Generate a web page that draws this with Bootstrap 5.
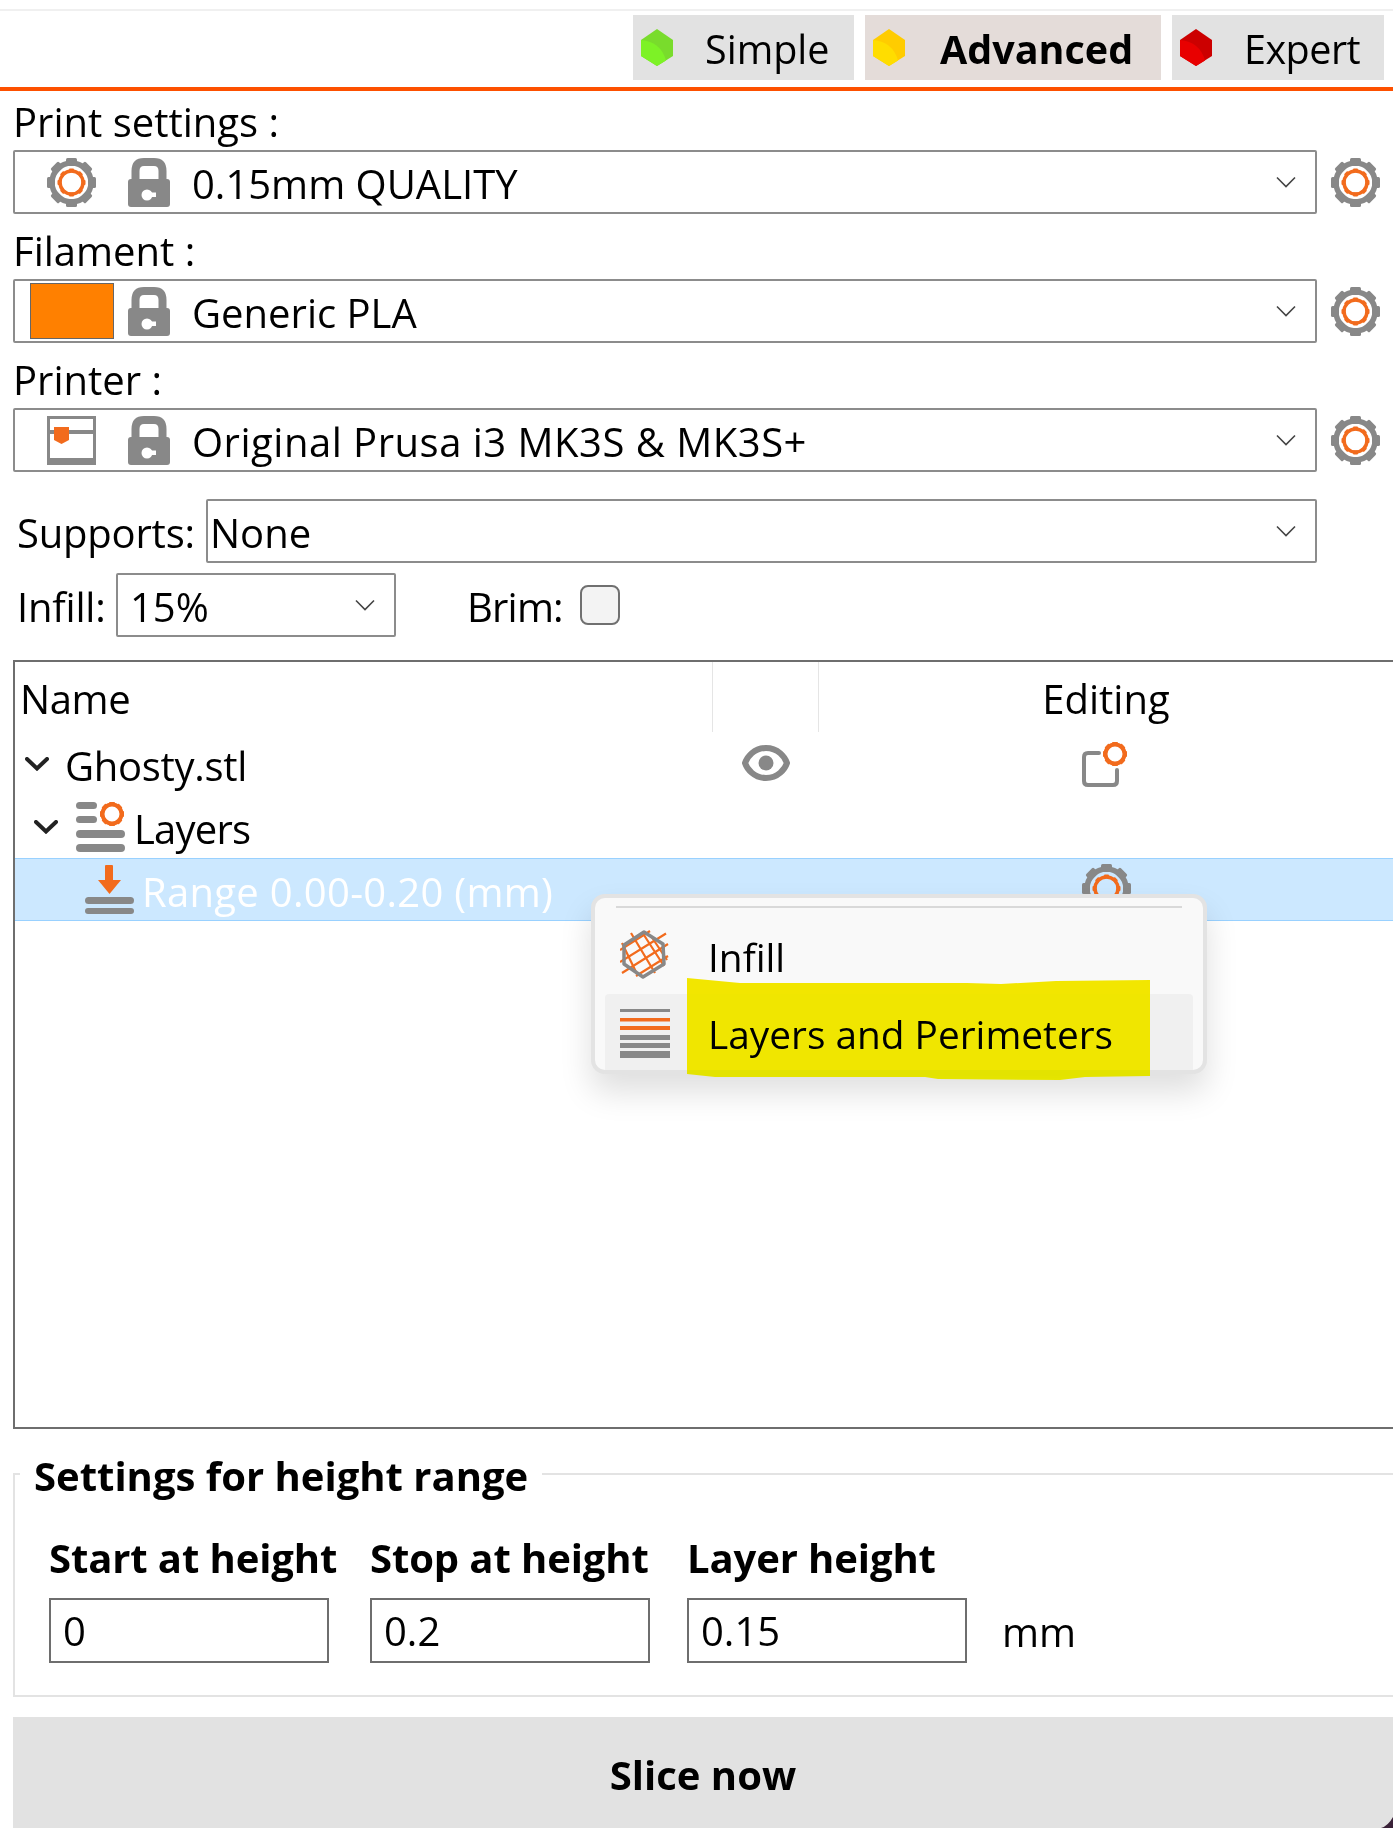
<!DOCTYPE html>
<html lang="en">
  <head>
    <meta charset="UTF-8" />
    <meta name="viewport" content="width=device-width, initial-scale=1" />
    <title>Height range settings</title>
    <link href="https://cdn.jsdelivr.net/npm/bootstrap@5.3.0/dist/css/bootstrap.min.css" rel="stylesheet" />
    <style>
      html, body { height: 1828px; overflow: hidden; }
      body { position: relative; background: #fff; color: #000; font-family: "Open Sans", "Noto Sans", sans-serif; font-size: 40px; line-height: 1.2; }

      /* Open Sans sits a little higher than the original font */
      .tree-row span, .form-select span, .field-row label { padding-top: 3px; }
      .mode-btn span, .row-range span { padding-top: 5px; }

      /* mode bar */
      .top-rule { height: 2px; margin-top: 9px; background: #f0f0f0; }
      .mode-bar { gap: 11px; margin-top: 4px; padding: 0 9px 7px 0; border-bottom: 4px solid #fd5000; }
      .mode-btn { height: 65px; padding: 0 0 0 8px; border: 0; border-radius: 0; background: #e2e2e2; color: #000; font-size: 39.5px; line-height: 1.2; }
      .mode-btn.active-mode { background: #e4dcd9; font-weight: 700; }
      .mode-btn svg { width: 32px; height: 37px; flex: none; }
      .mode-simple { width: 221px; }
      .mode-simple span { margin-left: 32px; }
      .mode-adv { width: 296px; }
      .mode-adv span { margin-left: 35px; }
      .mode-exp { width: 212px; }
      .mode-exp span { margin-left: 32px; letter-spacing: -.5px; }

      /* preset rows */
      .presets { padding-left: 13px; }
      .preset-label { height: 65px; padding-top: 13px; }
      .preset-label.first-label { height: 59px; padding-top: 7px; }
      .preset-combo { width: 1304px; height: 64px; padding: 0 19px 0 32px; background-image: none; border: 2px solid #8c8c8c; border-radius: 2px; color: #000; font-size: 40px; line-height: 1.2; }
      .combo-swatch { padding-left: 15px; }
      .combo-text { margin-left: 22px; }
      .combo-wide { letter-spacing: .5px; }
      .lock-ico { width: 42px; height: 49px; flex: none; margin-left: 32px; }
      .swatch-box { width: 84px; height: 56px; flex: none; background: #ff8000; border: 1px solid #666; }
      .swatch-box + .lock-ico { margin-left: 14px; }
      .gear-ico { width: 49px; height: 49px; flex: none; }
      .chev-ico { width: 20px; height: 12px; flex: none; margin-left: auto; }
      .side-gear { margin-left: 14px; }

      .field-row { height: 64px; padding-left: 4px; }
      .plain-combo { height: 64px; background-image: none; border: 2px solid #8c8c8c; border-radius: 2px; color: #000; font-size: 40px; line-height: 1.2; }
      .supports-label { width: 189px; flex: none; letter-spacing: -.2px; }
      .supports-combo { width: 1111px; padding: 0 19px 0 2px; }
      .infill-label { width: 99px; flex: none; letter-spacing: -.2px; }
      .infill-combo { width: 280px; padding: 0 19px 0 12px; }
      .brim-label { width: 113px; flex: none; margin-left: 71px; letter-spacing: -.8px; }
      .brim-check { width: 40px; height: 40px; margin: 0; background-color: #f3f3f3; border: 2px solid #707070; border-radius: 8px !important; }
      .mt-supports { margin-top: 27px; }
      .mt-infill { margin-top: 10px; }

      /* object list */
      .tree-panel { position: relative; height: 769px; margin: 23px 0 0 13px; border: 2px solid #6e6e6e; border-right: 0; }
      .tree-head { height: 70px; }
      .head-name { width: 698px; padding: 13px 0 0 5px; border-right: 1px solid #e5e5e5; letter-spacing: -.4px; }
      .head-eye { width: 106px; border-right: 1px solid #e5e5e5; }
      .head-edit { flex: 1; padding-top: 13px; text-align: center; }
      .tree-row { height: 62px; }
      .chev-bold { width: 24px; height: 14px; flex: none; }
      .row-file { height: 64px; padding-left: 10px; }
      .row-file .chev-bold { margin-right: 16px; }
      .row-file span { letter-spacing: -.3px; }
      .row-layers { padding-left: 19px; }
      .row-layers .chev-bold { margin-right: 18px; }
      .row-layers .layers-ico { width: 49px; height: 50px; margin-right: 9px; }
      .row-layers span { letter-spacing: -.8px; }
      .row-range { height: 63px; padding-left: 70px; background: #cce8ff; border-top: 1px solid #99d1ff; border-bottom: 1px solid #99d1ff; color: #fff; }
      .row-range .range-ico { width: 49px; height: 49px; margin-right: 8px; }
      .row-range span { letter-spacing: .3px; }
      .eye-ico { position: absolute; left: 727px; top: 83px; width: 48px; height: 36px; }
      .edit-ico { position: absolute; left: 1067px; top: 80px; width: 45px; height: 45px; }
      .row-gear { position: absolute; left: 1067px; top: 202px; }

      /* popup menu */
      .pop-menu { position: absolute; left: 576px; top: 232px; display: block; width: 616px; height: 180px; padding: 0 10px; background: #f9f9f9; border: 4px solid #e3e3e3; border-radius: 14px; box-shadow: 0 18px 32px rgba(0, 0, 0, .13); font-size: 39px; overflow: hidden; }
      .pop-menu .dropdown-divider { margin: 8px 11px 0; border-top: 2px solid #d9d9d9; opacity: 1; }
      .pop-item { height: 86px; padding: 0 0 0 15px; color: #000; font-size: 38.800px; line-height: 1.2; }
      .pop-item span { padding-top: 12px; }
      .pop-item:hover { color: #000; background: transparent; }
      .pop-item.hot { height: 78px; background: #f0f0f0; border-radius: 4px 4px 0 0; }
      .pop-item.hot span { padding-top: 2px; }
      .pop-item:hover.hot { background: #f0f0f0; }
      .pop-item svg { width: 50px; height: 49px; flex: none; margin-right: 38px; }
      .pop-item .infill-ico { margin-top: 6px; }
      .marker { position: absolute; left: 672px; top: 316px; width: 463px; height: 102px; z-index: 1001; mix-blend-mode: darken; }

      /* height range */
      .range-box { height: 249px; margin: 19px 0 0 13px; padding: 0 0 0 34px; border: 2px solid #e3e3e3; border-right: 0; }
      .range-box legend { margin: 0 0 0 -29px; padding: 4px 14px 0; font-size: 40px; font-weight: 700; line-height: 1.2; }
      .range-cols { margin-top: 34px; }
      .range-col { width: 280px; }
      .range-col + .range-col { margin-left: 41px; }
      .range-col.third-col { margin-left: 37px; }
      .range-col .form-label { display: block; margin: 0 0 16px; font-weight: 700; font-size: 40px; line-height: 1.2; white-space: nowrap; letter-spacing: -.1px; }
      .range-input { height: 65px; padding: 0 12px; border: 2px solid #6e6e6e; border-radius: 0; color: #000; font-size: 40px; }
      .unit-text { margin: 0 0 7px 35px; }

      .slice-btn { display: block; width: 1380px; height: 111px; margin: 20px 0 0 13px; padding: 5px 0 0; border: 0; border-radius: 0; background: #e2e2e2; color: #000; font-size: 40px; font-weight: 700; }
      .corner-mark { position: absolute; right: 0; bottom: 0; width: 12px; height: 11px; }
    </style>
  </head>
  <body>
    <svg width="0" height="0" class="position-absolute">
      <defs>
        <g id="teeth-gray" fill="#888">
          <rect x="19" y="0" width="11" height="8" rx="1.500" />
          <rect x="19" y="0" width="11" height="8" rx="1.500" transform="rotate(45 24.5 24.5)" />
          <rect x="19" y="0" width="11" height="8" rx="1.500" transform="rotate(90 24.5 24.5)" />
          <rect x="19" y="0" width="11" height="8" rx="1.500" transform="rotate(135 24.5 24.5)" />
          <rect x="19" y="0" width="11" height="8" rx="1.500" transform="rotate(180 24.5 24.5)" />
          <rect x="19" y="0" width="11" height="8" rx="1.500" transform="rotate(225 24.5 24.5)" />
          <rect x="19" y="0" width="11" height="8" rx="1.500" transform="rotate(270 24.5 24.5)" />
          <rect x="19" y="0" width="11" height="8" rx="1.500" transform="rotate(315 24.5 24.5)" />
        </g>
        <g id="teeth-orange" fill="#f26b1d">
          <rect x="22" y="10.500" width="5" height="4" rx="1" />
          <rect x="22" y="10.500" width="5" height="4" rx="1" transform="rotate(45 24.5 24.5)" />
          <rect x="22" y="10.500" width="5" height="4" rx="1" transform="rotate(90 24.5 24.5)" />
          <rect x="22" y="10.500" width="5" height="4" rx="1" transform="rotate(135 24.5 24.5)" />
          <rect x="22" y="10.500" width="5" height="4" rx="1" transform="rotate(180 24.5 24.5)" />
          <rect x="22" y="10.500" width="5" height="4" rx="1" transform="rotate(225 24.5 24.5)" />
          <rect x="22" y="10.500" width="5" height="4" rx="1" transform="rotate(270 24.5 24.5)" />
          <rect x="22" y="10.500" width="5" height="4" rx="1" transform="rotate(315 24.5 24.5)" />
        </g>
        <symbol id="gear" viewBox="0 0 49 49">
          <use href="#teeth-gray" />
          <circle cx="24.5" cy="24.5" r="19.500" fill="none" stroke="#888" stroke-width="5.500" />
          <use href="#teeth-orange" />
          <circle cx="24.5" cy="24.5" r="11.500" fill="none" stroke="#f26b1d" stroke-width="3.500" />
        </symbol>
        <symbol id="gear-o" viewBox="0 0 24 24">
          <circle cx="12" cy="12" r="9.500" fill="none" stroke="#f26b1d" stroke-width="4" />
          <g fill="#f26b1d">
            <rect x="9" y="0" width="6" height="4" rx="1" />
            <rect x="9" y="0" width="6" height="4" rx="1" transform="rotate(45 12 12)" />
            <rect x="9" y="0" width="6" height="4" rx="1" transform="rotate(90 12 12)" />
            <rect x="9" y="0" width="6" height="4" rx="1" transform="rotate(135 12 12)" />
            <rect x="9" y="0" width="6" height="4" rx="1" transform="rotate(180 12 12)" />
            <rect x="9" y="0" width="6" height="4" rx="1" transform="rotate(225 12 12)" />
            <rect x="9" y="0" width="6" height="4" rx="1" transform="rotate(270 12 12)" />
            <rect x="9" y="0" width="6" height="4" rx="1" transform="rotate(315 12 12)" />
          </g>
        </symbol>
        <symbol id="lock" viewBox="0 0 42 49">
          <path d="M7.500 24V13Q7.500 4 16 4H26Q34.500 4 34.500 13V24" fill="none" stroke="#888" stroke-width="8" />
          <rect x="0" y="21" width="42" height="28" rx="3" fill="#888" />
          <circle cx="19" cy="37" r="5.500" fill="#fff" />
          <rect x="19" y="34.500" width="9" height="4.500" fill="#fff" />
        </symbol>
        <symbol id="chev" viewBox="0 0 20 12">
          <path d="M1 1.500 10 10.500 19 1.500" fill="none" stroke="#444" stroke-width="1.600" />
        </symbol>
        <symbol id="chev-b" viewBox="0 0 24 14">
          <path d="M2 2 12 11.500 22 2" fill="none" stroke="#222" stroke-width="4" stroke-linecap="round" />
        </symbol>
      </defs>
    </svg>

    <div class="top-rule"></div>
    <div class="mode-bar d-flex justify-content-end">
      <button type="button" class="btn mode-btn mode-simple d-flex align-items-center">
        <svg viewBox="0 0 32 37"><path d="M16 0 32 11V27L16 37 0 27V11Z" fill="#79dc2c" /><path d="M0 11Q20 13 25 31.500L16 37 0 27Z" fill="#7df226" /></svg>
        <span>Simple</span>
      </button>
      <button type="button" class="btn mode-btn mode-adv active-mode d-flex align-items-center">
        <svg viewBox="0 0 32 37"><path d="M16 0 32 11V27L16 37 0 27V11Z" fill="#ffcc00" /><path d="M0 11Q20 13 25 31.500L16 37 0 27Z" fill="#ffdd00" /></svg>
        <span>Advanced</span>
      </button>
      <button type="button" class="btn mode-btn mode-exp d-flex align-items-center">
        <svg viewBox="0 0 32 37"><path d="M16 0 32 11V27L16 37 0 27V11Z" fill="#cc0000" /><path d="M0 11Q20 13 25 31.500L16 37 0 27Z" fill="#e80000" /></svg>
        <span>Expert</span>
      </button>
    </div>

    <div class="presets">
      <div class="preset-label first-label">Print settings :</div>
      <div class="d-flex align-items-center">
        <div class="form-select preset-combo d-flex align-items-center">
          <svg class="gear-ico"><use href="#gear" /></svg>
          <svg class="lock-ico"><use href="#lock" /></svg>
          <span class="combo-text">0.15mm QUALITY</span>
          <svg class="chev-ico"><use href="#chev" /></svg>
        </div>
        <svg class="gear-ico side-gear"><use href="#gear" /></svg>
      </div>

      <div class="preset-label">Filament :</div>
      <div class="d-flex align-items-center">
        <div class="form-select preset-combo combo-swatch d-flex align-items-center">
          <div class="swatch-box"></div>
          <svg class="lock-ico"><use href="#lock" /></svg>
          <span class="combo-text">Generic PLA</span>
          <svg class="chev-ico"><use href="#chev" /></svg>
        </div>
        <svg class="gear-ico side-gear"><use href="#gear" /></svg>
      </div>

      <div class="preset-label">Printer :</div>
      <div class="d-flex align-items-center">
        <div class="form-select preset-combo d-flex align-items-center">
          <svg class="gear-ico" viewBox="0 0 49 49">
            <path d="M1.500 1.500H47.500V47.500H1.500Z" fill="none" stroke="#888" stroke-width="3" />
            <rect x="0" y="14" width="49" height="4" fill="#888" />
            <rect x="0" y="42" width="49" height="7" fill="#888" />
            <path d="M7 11H22V24L14.500 28 7 24Z" fill="#f26b1d" />
          </svg>
          <svg class="lock-ico"><use href="#lock" /></svg>
          <span class="combo-text combo-wide">Original Prusa i3 MK3S &amp; MK3S+</span>
          <svg class="chev-ico"><use href="#chev" /></svg>
        </div>
        <svg class="gear-ico side-gear"><use href="#gear" /></svg>
      </div>

      <div class="field-row mt-supports d-flex align-items-center">
        <label class="supports-label">Supports:</label>
        <div class="form-select plain-combo supports-combo d-flex align-items-center">
          <span>None</span>
          <svg class="chev-ico"><use href="#chev" /></svg>
        </div>
      </div>
      <div class="field-row mt-infill d-flex align-items-center">
        <label class="infill-label">Infill:</label>
        <div class="form-select plain-combo infill-combo d-flex align-items-center">
          <span>15%</span>
          <svg class="chev-ico"><use href="#chev" /></svg>
        </div>
        <label class="brim-label" for="brim">Brim:</label>
        <input class="form-check-input brim-check" type="checkbox" id="brim" />
      </div>
    </div>

    <div class="tree-panel">
      <div class="tree-head d-flex">
        <div class="head-name">Name</div>
        <div class="head-eye"></div>
        <div class="head-edit">Editing</div>
      </div>
      <div class="tree-row row-file d-flex align-items-center">
        <svg class="chev-bold"><use href="#chev-b" /></svg>
        <span>Ghosty.stl</span>
      </div>
      <div class="tree-row row-layers d-flex align-items-center">
        <svg class="chev-bold"><use href="#chev-b" /></svg>
        <svg class="layers-ico" viewBox="0 0 49 50">
          <rect x="0" y="0" width="21" height="7" rx="3.500" fill="#888" />
          <rect x="0" y="14" width="21" height="7" rx="3.500" fill="#888" />
          <rect x="0" y="28" width="49" height="8" rx="4" fill="#888" />
          <rect x="0" y="42" width="49" height="8" rx="4" fill="#888" />
          <use href="#gear-o" x="24" y="0" width="24" height="24" />
        </svg>
        <span>Layers</span>
      </div>
      <div class="tree-row row-range d-flex align-items-center">
        <svg class="range-ico" viewBox="0 0 49 49">
          <rect x="20" y="0" width="8" height="16" rx="1" fill="#f26b1d" />
          <path d="M13 15H36L24.500 29Z" fill="#f26b1d" />
          <rect x="0" y="32" width="49" height="7" rx="3.500" fill="#888" />
          <rect x="0" y="43" width="49" height="6" rx="3" fill="#888" />
        </svg>
        <span>Range 0.00-0.20 (mm)</span>
      </div>

      <svg class="eye-ico" viewBox="0 0 48 36">
        <path d="M24 3C36 3 43 12 45 18 43 24 36 33 24 33 12 33 5 24 3 18 5 12 12 3 24 3Z" fill="#fff" stroke="#888" stroke-width="6" />
        <circle cx="24" cy="18" r="7.500" fill="#888" />
      </svg>
      <svg class="edit-ico" viewBox="0 0 45 45">
        <path d="M17 11H6Q2 11 2 15V39Q2 43 6 43H31Q35 43 35 39V28" fill="none" stroke="#888" stroke-width="4" stroke-linecap="round" />
        <use href="#gear-o" x="21" y="0" width="24" height="24" />
      </svg>
      <svg class="gear-ico row-gear"><use href="#gear" /></svg>

      <div class="dropdown-menu pop-menu">
        <hr class="dropdown-divider" />
        <a class="dropdown-item pop-item d-flex align-items-center" href="#">
          <svg class="infill-ico" viewBox="0 0 50 49">
            <g stroke="#f26b1d" stroke-width="2.200" fill="none">
              <path d="M0 20 30 1M0 32 46 3.500M2 43 48 14M16 46 48 26" />
              <path d="M2 13 17 44M11 3 35 43M22 2 44 36M31 6 47 30" />
            </g>
            <path d="M24 2 43 14 44 34 23 47 4 34 4 15Z" fill="none" stroke="#888" stroke-width="3.500" stroke-linejoin="round" />
          </svg>
          <span>Infill</span>
        </a>
        <a class="dropdown-item pop-item hot d-flex align-items-center" href="#">
          <svg viewBox="0 0 50 49">
            <rect x="0" y="0" width="50" height="3" fill="#888" />
            <rect x="0" y="9" width="50" height="3.500" fill="#f26b1d" />
            <rect x="0" y="17" width="50" height="4" fill="#f26b1d" />
            <rect x="0" y="26" width="50" height="5" fill="#888" />
            <rect x="0" y="34" width="50" height="5" fill="#888" />
            <rect x="0" y="42" width="50" height="7" fill="#888" />
          </svg>
          <span>Layers and Perimeters</span>
        </a>
      </div>
      <svg class="marker" viewBox="0 0 463 102">
        <path d="M0 0 53 5H280L314 6 369 3 463 2V98L398 99 373 102 251 101 238 99H28L0 96Z" fill="#f2e600" />
      </svg>
    </div>

    <fieldset class="range-box">
      <legend class="float-none w-auto">Settings for height range</legend>
      <div class="range-cols d-flex align-items-end">
        <div class="range-col">
          <label class="form-label">Start at height</label>
          <input class="form-control range-input" type="text" value="0" />
        </div>
        <div class="range-col">
          <label class="form-label">Stop at height</label>
          <input class="form-control range-input" type="text" value="0.2" />
        </div>
        <div class="range-col third-col">
          <label class="form-label">Layer height</label>
          <input class="form-control range-input" type="text" value="0.15" />
        </div>
        <div class="unit-text">mm</div>
      </div>
    </fieldset>

    <button type="button" class="btn slice-btn">Slice now</button>
    <svg class="corner-mark" viewBox="0 0 12 11"><path d="M12 0V11H0Q7 9 12 0Z" fill="#3a2238" /></svg>
  </body>
</html>
